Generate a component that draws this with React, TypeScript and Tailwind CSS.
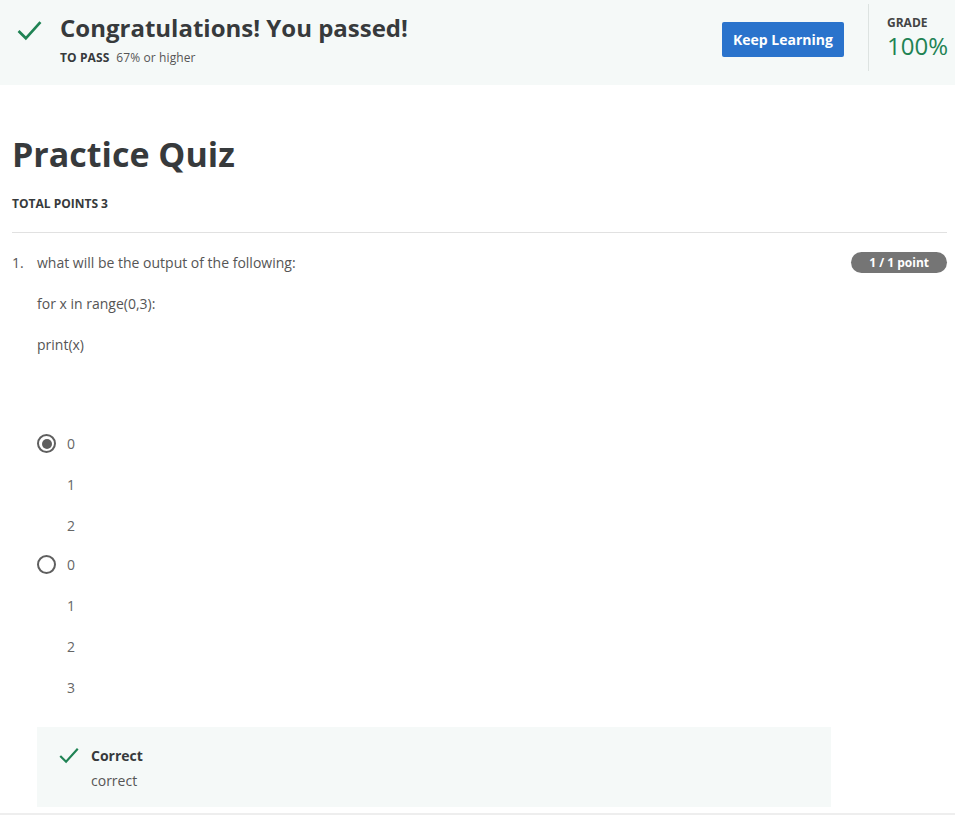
import React from "react";

const font = { fontFamily: '"Open Sans", "Liberation Sans", sans-serif' };

const Check = ({ className }: { className?: string }) => (
	<svg viewBox="0 0 24 20" className={className} fill="none">
		<path d="M1.5 10.5 L8.5 17.5 L22.5 2" stroke="#1f8354" strokeWidth="2.6" />
	</svg>
);

const Radio = ({ checked }: { checked?: boolean }) => (
	<span className="size-[19px] rounded-full border-2 border-[#5f5f5f] grid place-items-center bg-white">
		{checked && <span className="size-[10px] rounded-full bg-[#5f5f5f]" />}
	</span>
);

const Option = ({ lines, checked }: { lines: string[]; checked?: boolean }) => (
	<div className="flex flex-col">
		{lines.map((l, i) => (
			<div key={i} className="flex items-center h-[41px]">
				<span className="w-[30px] flex">{i === 0 && <Radio checked={checked} />}</span>
				<span className="text-[14px] text-[#666]">{l}</span>
			</div>
		))}
	</div>
);

export default function App() {
	return (
		<div className="w-[955px] h-[815px] bg-white text-[#373a3c] overflow-hidden" style={font}>
			<div className="h-[85px] bg-[#f5f9f8] flex">
				<div className="flex pl-[17px] pt-[16px] gap-[18px]">
					<Check className="w-[25px] h-[21px] mt-[4px]" />
					<div>
						<h1 className="text-[24px] font-bold leading-[24px] text-[#373a3c]">
							Congratulations! You passed!
						</h1>
						<div className="mt-[10px] text-[12px] leading-[16px] flex gap-[7px] tracking-[0.1px]">
							<span className="font-bold">TO PASS</span>
							<span className="text-[#555]">67% or higher</span>
						</div>
					</div>
				</div>
				<div className="ml-auto flex items-start">
					<button className="mt-[22px] w-[122px] h-[35px] bg-[#2a73cc] rounded-[2px] text-white text-[14px] font-bold">
						Keep Learning
					</button>
					<div className="ml-[24px] mt-[4px] w-px h-[67px] bg-[#dde3e1]" />
					<div className="pl-[18px] pr-[7px] pt-[15px]">
						<div className="text-[12px] font-bold leading-[16px] text-[#444]">GRADE</div>
						<div className="text-[24px] leading-[30px] text-[#1f8354]">100%</div>
					</div>
				</div>
			</div>

			<div className="pl-[12px] pr-[8px] pt-[47px]">
				<h2 className="text-[34px] font-bold leading-[44px]">Practice Quiz</h2>
				<div className="mt-[20px] text-[12px] font-bold leading-[16px]">TOTAL POINTS 3</div>
				<div className="mt-[20px] h-px bg-[#e1e1e1]" />

				<div className="flex mt-[19px]">
					<span className="w-[25px] text-[14px] text-[#555] leading-[21px]">1.</span>
					<div className="flex-1 text-[14px] text-[#555] leading-[21px]">
						<p>what will be the output of the following:</p>
						<p className="mt-[20px]">for x in range(0,3):</p>
						<p className="mt-[20px]">print(x)</p>
					</div>
					<span className="h-[21px] px-[18px] rounded-full bg-[#757575] text-white text-[12px] font-bold leading-[21px]">
						1 / 1 point
					</span>
				</div>

				<div className="ml-[25px] mt-[68px] flex flex-col">
					<Option lines={["0", "1", "2"]} checked />
					<div className="-mt-[2px]">
						<Option lines={["0", "1", "2", "3"]} />
					</div>
				</div>

				<div className="ml-[25px] mt-[19px] w-[794px] h-[80px] bg-[#f5f9f8] flex pl-[22px] pt-[20px] gap-[12px]">
					<Check className="w-[20px] h-[17px]" />
					<div className="-mt-[2px]">
						<div className="text-[14px] font-bold leading-[22px]">Correct</div>
						<div className="text-[14px] text-[#555] leading-[22px] mt-[3px]">correct</div>
					</div>
				</div>
			</div>
			<div className="mt-[6px] h-[3px] bg-[#eeeeee]" />
		</div>
	);
}
